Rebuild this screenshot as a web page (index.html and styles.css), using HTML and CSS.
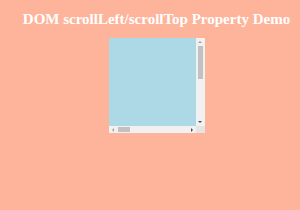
FILE: index.html
```
<!DOCTYPE html>
<html lang="en">
<head>
    <meta charset="UTF-8">
    <meta name="viewport" content="width=device-width, initial-scale=1.0">
    <title>DOM scrollLeft/scrollTop Property</title>
    <link rel="stylesheet" href="styles.css">
</head>
<body>

<div class="page">
    <h1>DOM scrollLeft/scrollTop Property Demo</h1>

    <!-- scrollable box, scrollbars drawn by hand -->
    <div class="scroll-box">
        <div class="viewport" id="box">
            <div class="scroll-content"></div>
        </div>
        <div class="vbar">
            <span class="arrow up"></span>
            <div class="track">
                <div class="thumb"></div>
            </div>
            <span class="arrow down"></span>
        </div>
        <div class="hbar">
            <span class="arrow left"></span>
            <div class="track">
                <div class="thumb"></div>
            </div>
            <span class="arrow right"></span>
        </div>
        <div class="corner"></div>
    </div>
</div>

</body>
</html>
```

FILE: styles.css
```
* {
    box-sizing: border-box;
    margin: 0;
    padding: 0;
}

body {
    background: #fdb49b;
    font-family: "Liberation Serif", "Times New Roman", serif;
    width: 300px;
    height: 210px;
}

.page {
    padding: 12px 0 0 13px;
    text-align: center;
}

h1 {
    color: white;
    font-size: 15px;
    font-weight: bold;
    line-height: 14px;
    margin-bottom: 12px;
}

.scroll-box {
    width: 96px;
    height: 95px;
    margin: 0 auto;
    display: grid;
    grid-template-columns: 87px 9px;
    grid-template-rows: 88px 7px;
}

.viewport {
    overflow: hidden;
    background: lightblue;
}

.scroll-content {
    width: 560px;
    height: 200px;
}

/* scrollbars */
.vbar, .hbar {
    background: #f1f1f1;
    display: flex;
    align-items: center;
}

.vbar {
    flex-direction: column;
}

.vbar .track {
    flex: 1;
    width: 100%;
    padding: 1px 2px 0;
}

.vbar .thumb {
    height: 33px;
    background: #c1c1c1;
}

.hbar .track {
    flex: 1;
    height: 100%;
    padding: 1px 0 1px 2px;
}

.hbar .thumb {
    width: 12px;
    height: 100%;
    background: #c1c1c1;
}

.corner {
    background: #e4e4e4;
}

.arrow {
    width: 0;
    height: 0;
    flex: none;
}

.arrow.up {
    margin: 3px 0 2px;
    border-left: 2px solid transparent;
    border-right: 2px solid transparent;
    border-bottom: 2px solid #a3a3a3;
}

.arrow.down {
    margin: 2px 0 3px;
    border-left: 2px solid transparent;
    border-right: 2px solid transparent;
    border-top: 2px solid #505050;
}

.arrow.left {
    margin: 0 2px 0 3px;
    border-top: 2px solid transparent;
    border-bottom: 2px solid transparent;
    border-right: 2px solid #a3a3a3;
}

.arrow.right {
    margin: 0 3px 0 2px;
    border-top: 2px solid transparent;
    border-bottom: 2px solid transparent;
    border-left: 2px solid #505050;
}
```
